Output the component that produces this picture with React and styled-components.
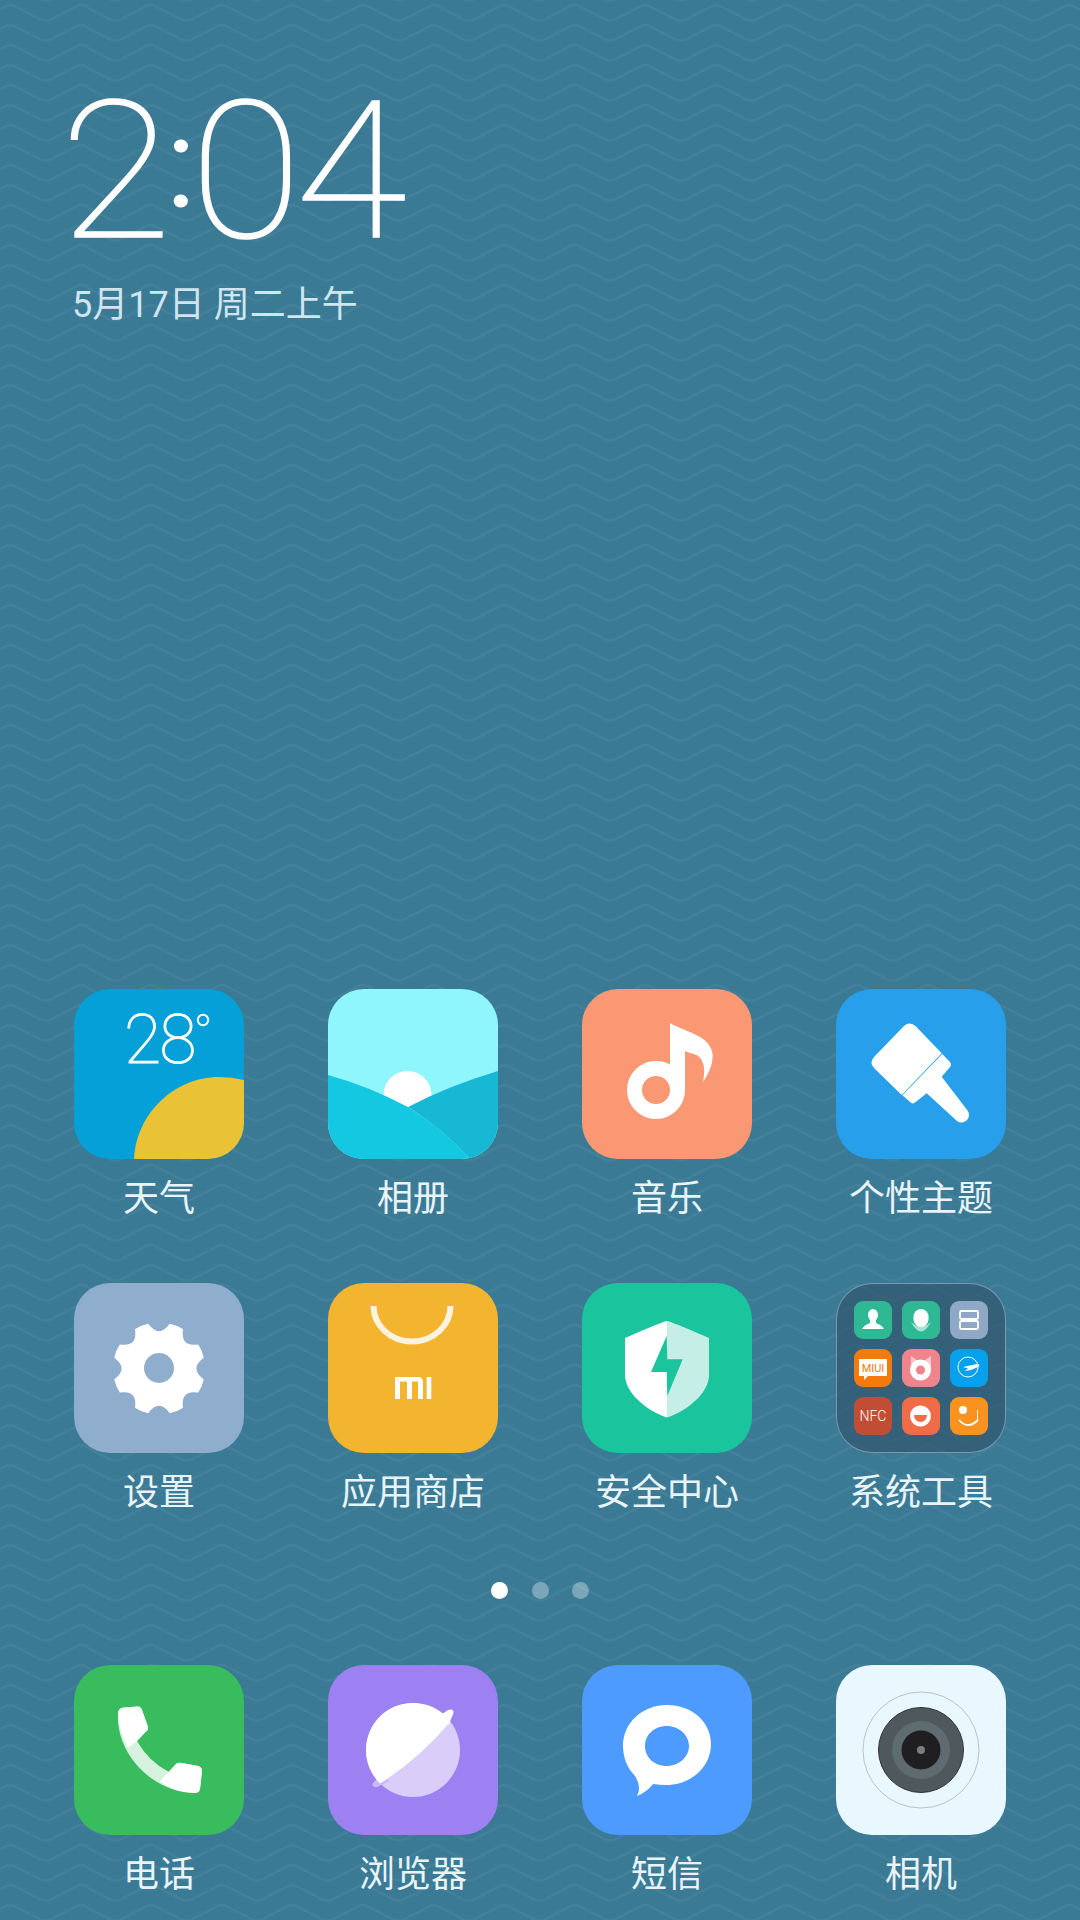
import React from "react";
import styled, { createGlobalStyle } from "styled-components";

const CJK = `"Noto Sans CJK SC", "Noto Sans", sans-serif`;

const PERIOD = 70.6;
const wave = (y) => {
  let d = "";
  for (let k = -1; k <= 2; k++) {
    const p = 10 + k * PERIOD;
    const t = p + PERIOD / 2;
    d += `${k === -1 ? "M" : "L"}${p - 4} ${y + 6} Q${p} ${y + 4} ${p + 4} ${y + 6} L${t - 5} ${y + 19.5} Q${t} ${y + 21.5} ${t + 5} ${y + 19.5} `;
  }
  return d;
};
const tile = `<svg xmlns='http://www.w3.org/2000/svg' width='${PERIOD}' height='20'><path d='${[-20, 0, 20]
  .map(wave)
  .join(" ")}' fill='none' stroke='white' stroke-opacity='0.045' stroke-width='2.4'/></svg>`;

const Global = createGlobalStyle`
  html, body { margin: 0; padding: 0; background: #3b7a95; }
  * { box-sizing: border-box; }
`;

const Screen = styled.main`
  width: 1080px;
  height: 1920px;
  overflow: hidden;
  display: flex;
  flex-direction: column;
  padding-bottom: 26px;
  background-color: #3b7a95;
  background-image: url("data:image/svg+xml,${encodeURIComponent(tile)}");
  background-size: ${PERIOD}px 20px;
  font-family: ${CJK};
  color: #fff;
`;

const ClockBlock = styled.section`
  padding: 60px 0 0 60px;
  flex: 1;
`;

const Time = styled.div`
  font-family: Roboto, Inter, sans-serif;
  font-weight: 100;
  font-size: 192px;
  line-height: 224px;
  height: 224px;
  letter-spacing: -6px;
  -webkit-text-stroke: 1.6px #fff;
  white-space: nowrap;
  transform: scaleX(1.06);
  transform-origin: left center;
`;

const Colon = styled.span`
  font-size: 123px;
  font-weight: 300;
  line-height: 0;
  vertical-align: 32px;
  -webkit-text-stroke: 3px #fff;
  margin: 0 2px 0 2px;
`;

const DateLine = styled.div`
  margin: -2px 0 0 12px;
  font-family: Roboto, ${CJK};
  font-size: 36px;
  line-height: 46px;
  font-weight: 400;
  color: #cfe6f0;
  white-space: nowrap;
`;

const Grid = styled.section`
  padding: 0 32px;
  display: grid;
  grid-template-columns: repeat(4, 254px);
  row-gap: 65px;
`;

const AppCell = styled.div`
  display: flex;
  flex-direction: column;
  align-items: center;
`;

const Icon = styled.div`
  width: 170px;
  height: 170px;
  border-radius: 36px;
  overflow: hidden;
  background: ${(p) => p.$bg};
  flex: none;
  svg { display: block; }
`;

const FolderIcon = styled.div`
  width: 170px;
  height: 170px;
  border-radius: 36px;
  background: rgba(52, 88, 112, 0.75);
  border: 1.5px solid rgba(200, 225, 238, 0.45);
  padding: 17px;
  display: grid;
  grid-template-columns: repeat(3, 38px);
  grid-auto-rows: 38px;
  gap: 10px;
  flex: none;
`;

const Tile = styled.div`
  width: 38px;
  height: 38px;
  border-radius: 9px;
  overflow: hidden;
  background: ${(p) => p.$bg};
  svg { display: block; }
`;

const Label = styled.div`
  margin-top: 13px;
  font-size: 36px;
  line-height: 46px;
  font-weight: 400;
  color: #e9f4f8;
  white-space: nowrap;
`;

const Dots = styled.div`
  display: flex;
  justify-content: center;
  gap: 23.5px;
  margin: 70px 0 66px;
`;

const Dot = styled.span`
  width: 17px;
  height: 17px;
  border-radius: 50%;
  background: ${(p) => (p.$active ? "#fff" : "rgba(255,255,255,0.33)")};
`;

const Art = ({ children }) => (
  <svg width="170" height="170" viewBox="0 0 170 170">{children}</svg>
);
const Mini = ({ children }) => (
  <svg width="38" height="38" viewBox="0 0 38 38">{children}</svg>
);

const gearPath = (() => {
  const cx = 85, cy = 85.5, R = 46, V = 30;
  const pt = (r, deg) => {
    const a = (deg * Math.PI) / 180;
    return `${(cx + r * Math.cos(a)).toFixed(2)} ${(cy + r * Math.sin(a)).toFixed(2)}`;
  };
  let d = "";
  for (let i = 0; i < 8; i++) {
    const a = 22.5 + 45 * i;
    d += `${i === 0 ? "M" : "L"}${pt(R, a - 9)} Q${pt(R + 1, a)} ${pt(R, a + 9)} Q${pt(V, a + 22.5)} ${pt(R, a + 36)} `;
  }
  return d + "Z";
})();

const Weather = () => (
  <Icon $bg="#05a0d8">
    <Art>
      <path d="M60 170C62 125 100 88 145 88Q158 88 170 91V170Z" fill="#e9c236" />
      <text x="50" y="74" fontFamily="Roboto, sans-serif" fontWeight="100" fontSize="68" fill="#fff" stroke="#fff" strokeWidth="0.9" letterSpacing="-2">28</text>
      <circle cx="129" cy="31" r="5.2" fill="none" stroke="#fff" strokeWidth="2" />
    </Art>
  </Icon>
);

const Gallery = () => (
  <Icon $bg="#8ff6fd">
    <Art>
      <circle cx="79.5" cy="106" r="24" fill="#fff" />
      <path d="M80 118Q120 97 170 82V170H142Q115 140 80 118Z" fill="#16b8d4" />
      <path d="M0 86Q40 97 80 118Q115 140 142 170H0Z" fill="#15c8e2" />
    </Art>
  </Icon>
);

const Music = () => (
  <Icon $bg="#f99873">
    <Art>
      <circle cx="74" cy="101" r="21.5" fill="none" stroke="#fff" strokeWidth="15" />
      <path d="M88 34C100 42 125 45 130 62C133 72 126 86 121 93C124 80 122 68 112 65C108 64 105 63 103 62V101H88Z" fill="#fff" />
    </Art>
  </Icon>
);

const Brush = () => (
  <Icon $bg="#279fea">
    <Art>
      <path d="M105.7 64.3L80 37.5Q74 32 68 37L38 68Q33 74 38 79L65.7 106Z" fill="#fff" />
      <path d="M106.2 65L114 73Q116 76 114 78L105.7 87.7L131.5 121.5A7.5 7.5 0 0 1 121 132L90.7 104.3L79 113.5Q76.5 115.5 74 113L66.4 106.3Z" fill="#fff" />
    </Art>
  </Icon>
);

const Settings = () => (
  <Icon $bg="#8fadcd">
    <Art>
      <path d={gearPath} fill="#fff" />
      <circle cx="85" cy="85" r="15" fill="#8fadcd" />
    </Art>
  </Icon>
);

const Store = () => (
  <Icon $bg="#f3b530">
    <Art>
      <path d="M45.5 23A38.5 35.5 0 0 0 122.5 23" fill="none" stroke="#fdf3de" strokeWidth="6" />
      <path d="M67 94H90Q95 94 95 99V116H90V98.5H84V116H79V98.5H72V116H67ZM98.7 94H103.3V116H98.7Z" fill="#fff" />
    </Art>
  </Icon>
);

const Shield = () => (
  <Icon $bg="#1ac49d">
    <Art>
      <path d="M85 38Q82 38 43 55V92C43 110 65 128 85 134.5Z" fill="#fff" />
      <path d="M85 38Q88 38 127 55V92C127 110 105 128 85 134.5Z" fill="#c5efe6" />
      <path d="M84.7 52.7L69 89H84.7L85.3 113L100.7 76.3H85.3Z" fill="#1ac49d" />
    </Art>
  </Icon>
);

const Phone = () => (
  <Icon $bg="#38bc5e">
    <Art>
      <path d="M44 49Q44 43 50 42.5L64 41.5Q67 41.5 68 45L74 62Q74.5 65 72 66.5L63 76Q75 97 95 107L102 99Q104 97 108 98L124 101Q128 102 128 106L126 124Q125 128 121 128C80 128 42 90 44 49Z" fill="#d6f1de" />
      <path d="M44 49Q44 43 50 42.5L64 41.5Q67 41.5 68 45L74 62Q74.5 65 72 66.5L63 76L54 83Q45 66 44 49Z" fill="#fff" />
      <path d="M86 116.5L94.5 107L102 99Q104 97 108 98L124 101Q128 102 128 106L126 124Q125 128 121 128Q100 127 86 116.5Z" fill="#fff" />
    </Art>
  </Icon>
);

const Browser = () => (
  <Icon $bg="#9d80f2">
    <Art>
      <defs>
        <clipPath id="planet-lit">
          <path d="M122 57Q93 92 53 118H0V0H170V0Z" />
        </clipPath>
      </defs>
      <circle cx="85" cy="85" r="47" fill="#dbcdf9" />
      <path d="M45 118Q43 123 49 122L62 116L54 109Z" fill="#cbbaf8" />
      <path d="M114 49L120 45Q126 43 125.5 48L120.5 60Z" fill="#fff" />
      <circle cx="85" cy="85" r="47" fill="#fff" clipPath="url(#planet-lit)" />
    </Art>
  </Icon>
);

const Sms = () => (
  <Icon $bg="#4d9bff">
    <Art>
      <path fillRule="evenodd" d="M85 40C110 40 129 57 129 79C129 102 109 120 84 120Q78 120 71 119Q65 127 55 131Q60 122 53 111C45 103 41 92 41 81C41 58 60 40 85 40ZM84.7 61C72 61 63 70 63 81C63 92 72 101 84.7 101C97 101 107 92 107 81C107 70 97 61 84.7 61Z" fill="#fff" />
    </Art>
  </Icon>
);

const Camera = () => (
  <Icon $bg="#e9f8fe">
    <Art>
      <circle cx="85" cy="85" r="58" fill="none" stroke="#b7c4c6" strokeWidth="1" />
      <circle cx="85" cy="85" r="42.5" fill="#4f585c" stroke="#2f3538" strokeWidth="1" />
      <circle cx="85" cy="85" r="29" fill="#5f6c6f" />
      <circle cx="85" cy="85" r="19.5" fill="#1f1f21" />
      <circle cx="85" cy="85" r="4" fill="#7c7c7c" />
    </Art>
  </Icon>
);

const tiles = [
  { bg: "#2eb894", art: (<><ellipse cx="19" cy="14" rx="5" ry="6" fill="#fff" /><path d="M8 28Q10 24 16 22V18H22V22Q28 24 30 28Z" fill="#fff" /></>) },
  { bg: "#2eb894", art: (<><path d="M9 21Q19 40 29 21Q19 30 9 21Z" fill="#a5e3d2" /><rect x="11.5" y="8" width="15" height="18" rx="7.5" fill="#fff" /></>) },
  { bg: "#8fa8c6", art: (<><rect x="10" y="10" width="18" height="8" rx="1.5" fill="none" stroke="#fff" strokeWidth="1.8" /><rect x="10" y="20" width="18" height="8" rx="1.5" fill="none" stroke="#fff" strokeWidth="1.8" /></>) },
  { bg: "#f57a0e", art: (<><path d="M5 10H33V27H14L10 31V27H5Z" fill="#fff" /><text x="19" y="23" textAnchor="middle" fontFamily="Roboto, sans-serif" fontSize="11" fill="#f57a0e">MIUI</text></>) },
  { bg: "#f0848c", art: (<><path d="M9 7L16 12H22L29 7L29 22H9Z" fill="#f8c9cb" /><circle cx="18.5" cy="21" r="10.5" fill="#fff" /><circle cx="18.5" cy="21" r="4.5" fill="#f0848c" /></>) },
  { bg: "#07a0ec", art: (<><circle cx="18" cy="18" r="10" fill="none" stroke="#fff" strokeWidth="1" /><path d="M13 18L27 15Q31 15 28 18L21 21L15 22L18 19.5Z" fill="#fff" /></>) },
  { bg: "#c24d35", art: (<text x="19" y="24" textAnchor="middle" fontFamily="Roboto, sans-serif" fontWeight="300" fontSize="14" fill="#fff">NFC</text>) },
  { bg: "#ef6c47", art: (<><circle cx="18.5" cy="19" r="10.5" fill="#fff" /><path d="M12 18H25Q24.5 25 18.5 25Q12.5 25 12 18Z" fill="#ef6c47" /></>) },
  { bg: "#f8931f", art: (<><circle cx="13" cy="13" r="4" fill="#fff" /><path d="M9 23Q18 33 28 23" fill="none" stroke="#fff" strokeWidth="1.8" /><path d="M27.5 23V13" fill="none" stroke="#fff" strokeWidth="1" /></>) },
];

const Folder = () => (
  <FolderIcon>
    {tiles.map((t, i) => (
      <Tile key={i} $bg={t.bg}>
        <Mini>{t.art}</Mini>
      </Tile>
    ))}
  </FolderIcon>
);

const page = [
  [Weather, "天气"], [Gallery, "相册"], [Music, "音乐"], [Brush, "个性主题"],
  [Settings, "设置"], [Store, "应用商店"], [Shield, "安全中心"], [Folder, "系统工具"],
];
const dock = [
  [Phone, "电话"], [Browser, "浏览器"], [Sms, "短信"], [Camera, "相机"],
];

const Cell = ({ art: Drawing, label }) => (
  <AppCell>
    <Drawing />
    <Label>{label}</Label>
  </AppCell>
);

export default function App() {
  return (
    <Screen>
      <Global />
      <ClockBlock>
        <Time>2<Colon>:</Colon>04</Time>
        <DateLine>5月17日 周二上午</DateLine>
      </ClockBlock>
      <Grid>
        {page.map(([a, l]) => <Cell key={l} art={a} label={l} />)}
      </Grid>
      <Dots>
        <Dot $active />
        <Dot />
        <Dot />
      </Dots>
      <Grid>
        {dock.map(([a, l]) => <Cell key={l} art={a} label={l} />)}
      </Grid>
    </Screen>
  );
}
